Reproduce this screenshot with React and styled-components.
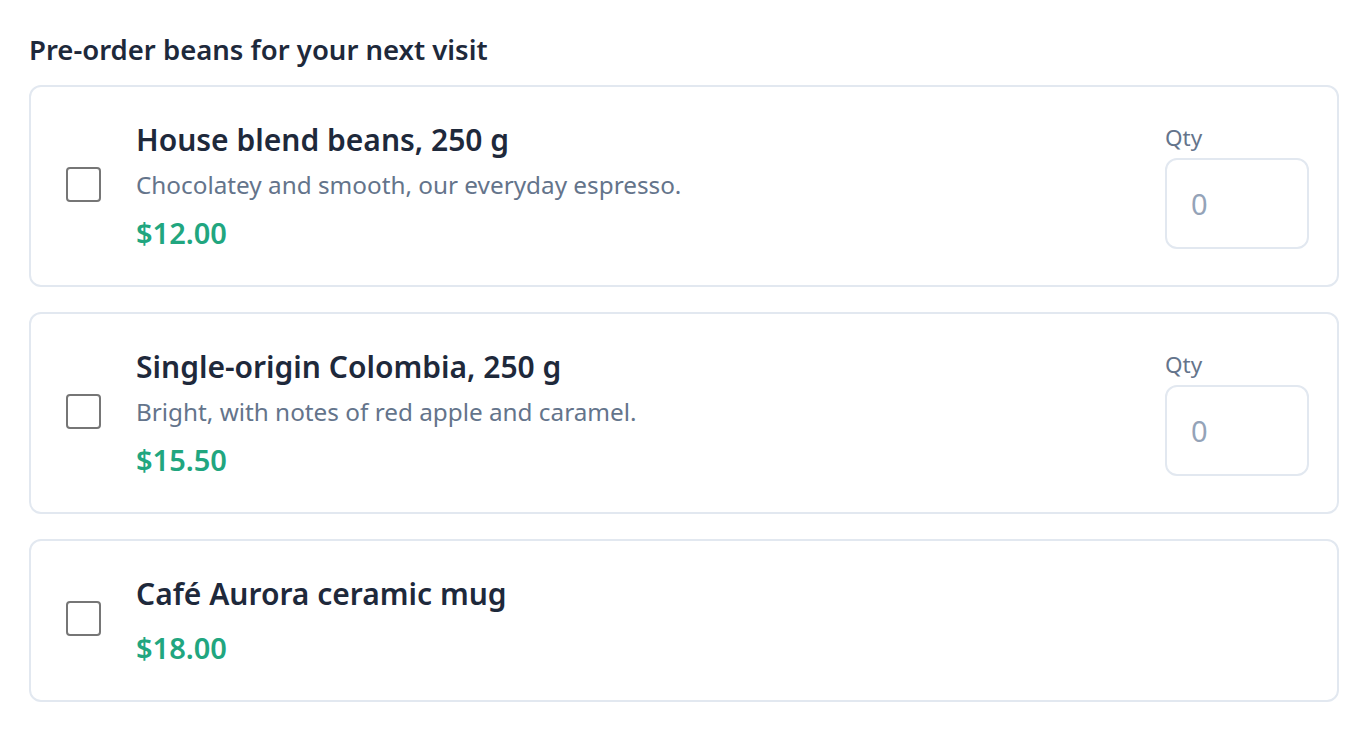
import styled, { createGlobalStyle } from "styled-components";

const GlobalStyle = createGlobalStyle`
  body {
    margin: 0;
    background: #ffffff;
    font-family: "Noto Sans", "Open Sans", sans-serif;
  }
`;

const Page = styled.main`
  padding: 32px 29px;
`;

const Heading = styled.h2`
  margin: 0 0 17px;
  font-size: 27.5px;
  line-height: 36px;
  font-weight: 600;
  color: #1e293b;
`;

const List = styled.ul`
  list-style: none;
  margin: 0;
  padding: 0;
  display: flex;
  flex-direction: column;
  gap: 25px;
`;

const Card = styled.li`
  display: flex;
  align-items: center;
  gap: 35px;
  padding: 35px 28px 35px 36px;
  border: 2px solid #e2e8f0;
  border-radius: 12px;
`;

const Check = styled.input.attrs({ type: "checkbox" })`
  appearance: none;
  margin: 0 0 4px -1px;
  width: 35px;
  height: 35px;
  flex: none;
  border: 2px solid #767676;
  border-radius: 4px;
  background: #fff;
`;

const Info = styled.div`
  flex: 1;
  display: flex;
  flex-direction: column;
`;

const Title = styled.div`
  font-size: 30px;
  line-height: 35px;
  font-weight: 600;
  color: #1e293b;
`;

const Desc = styled.div`
  margin-top: 12px;
  font-size: 24.3px;
  line-height: 31px;
  color: #64748b;
`;

const Price = styled.div`
  margin-top: ${(p) => (p.$afterDesc ? "15px" : "19px")};
  font-size: 29px;
  line-height: 35px;
  font-weight: 600;
  color: #21a67f;
`;

const QtyField = styled.label`
  display: flex;
  flex-direction: column;
  gap: 5px;
  font-size: 22.5px;
  line-height: 30px;
  color: #64748b;
`;

const QtyInput = styled.input`
  box-sizing: border-box;
  width: 144px;
  height: 91px;
  padding: 0 24px;
  border: 2px solid #e2e8f0;
  border-radius: 12px;
  font-family: inherit;
  font-size: 29px;
  color: #1e293b;
  outline: none;
  &::placeholder {
    color: #94a3b8;
  }
`;

const items = [
  {
    name: "House blend beans, 250 g",
    desc: "Chocolatey and smooth, our everyday espresso.",
    price: "$12.00",
    qty: true,
  },
  {
    name: "Single-origin Colombia, 250 g",
    desc: "Bright, with notes of red apple and caramel.",
    price: "$15.50",
    qty: true,
  },
  {
    name: "Café Aurora ceramic mug",
    price: "$18.00",
    qty: false,
  },
];

export default function App() {
  return (
    <Page>
      <GlobalStyle />
      <Heading>Pre-order beans for your next visit</Heading>
      <List>
        {items.map((item) => (
          <Card key={item.name}>
            <Check aria-label={item.name} />
            <Info>
              <Title>{item.name}</Title>
              {item.desc && <Desc>{item.desc}</Desc>}
              <Price $afterDesc={!!item.desc}>{item.price}</Price>
            </Info>
            {item.qty && (
              <QtyField>
                Qty
                <QtyInput type="number" placeholder="0" min="0" />
              </QtyField>
            )}
          </Card>
        ))}
      </List>
    </Page>
  );
}
